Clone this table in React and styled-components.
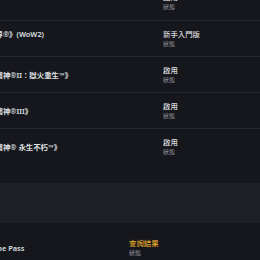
import React from "react";
import styled, { createGlobalStyle } from "styled-components";

const Global = createGlobalStyle`
  html, body {
    margin: 0;
    padding: 0;
    width: 260px;
    height: 260px;
    overflow: hidden;
    background: #16171c;
  }
  body {
    font-family: "Noto Sans", "Noto Sans CJK TC", sans-serif;
    -webkit-font-smoothing: antialiased;
  }
`;

const Page = styled.div`
  display: flex;
  flex-direction: column;
  width: 260px;
  height: 260px;
  overflow: hidden;
  background: #16171c;
`;

const Table = styled.div`
  display: flex;
  flex-direction: column;
  margin-left: ${(p) => p.$shift}px;
  margin-top: ${(p) => p.$offset || 0}px;
  padding-top: ${(p) => p.$padTop || 0}px;
  padding-bottom: ${(p) => p.$padBottom || 0}px;
`;

const Row = styled.div`
  display: grid;
  grid-template-columns: ${(p) => p.$titleWidth}px 1fr;
  height: ${(p) => p.$height || 36}px;
  box-sizing: border-box;
  border-bottom: ${(p) => (p.$last ? "none" : "1px solid #25272e")};
  align-items: center;
`;

const Title = styled.div`
  align-self: ${(p) => (p.$top != null ? "start" : "center")};
  margin-top: ${(p) => (p.$top != null ? `${p.$top}px` : "0")};
  font-size: 7.4px;
  line-height: 10px;
  font-weight: 600;
  color: #dfe0e3;
  white-space: nowrap;
`;

const Status = styled.div`
  display: flex;
  flex-direction: column;
`;

const Value = styled.span`
  font-size: 7.4px;
  line-height: 10px;
  font-weight: 500;
  color: ${(p) => (p.$accent ? "#e2a72b" : "#d9dadd")};
  white-space: nowrap;
`;

const Label = styled.span`
  font-size: 6px;
  line-height: 10px;
  color: #9c9ea5;
  white-space: nowrap;
`;

const Band = styled.div`
  height: 40px;
  background: #1e2027;
  flex-shrink: 0;
`;

const games = [
  { title: "《魔獸世界®》經典版", value: "啟用", top: 2, height: 37 },
  { title: "《魔獸世界®》(WoW2)", value: "新手入門版", top: 8 },
  { title: "《暗黑破壞神®II：獄火重生™》", value: "啟用" },
  { title: "《暗黑破壞神®III》", value: "啟用" },
  { title: "《暗黑破壞神® 永生不朽™》", value: "啟用" },
];

function StatusCell({ value, accent }) {
  return (
    <Status>
      <Value $accent={accent}>{value}</Value>
      <Label>狀態</Label>
    </Status>
  );
}

export default function App() {
  return (
    <>
      <Global />
      <Page>
        <Table $shift={-34} $offset={-16} $padBottom={18}>
          {games.map((g, i) => (
            <Row
              key={g.title}
              $titleWidth={197}
              $height={g.height}
              $last={i === games.length - 1}
            >
              <Title $top={g.top}>{g.title}</Title>
              <StatusCell value={g.value} />
            </Row>
          ))}
        </Table>
        <Band />
        <Table $shift={-26} $padTop={7}>
          <Row $titleWidth={155} $last>
            <Title>PC Game Pass</Title>
            <StatusCell value="查詢結果" accent />
          </Row>
        </Table>
      </Page>
    </>
  );
}
